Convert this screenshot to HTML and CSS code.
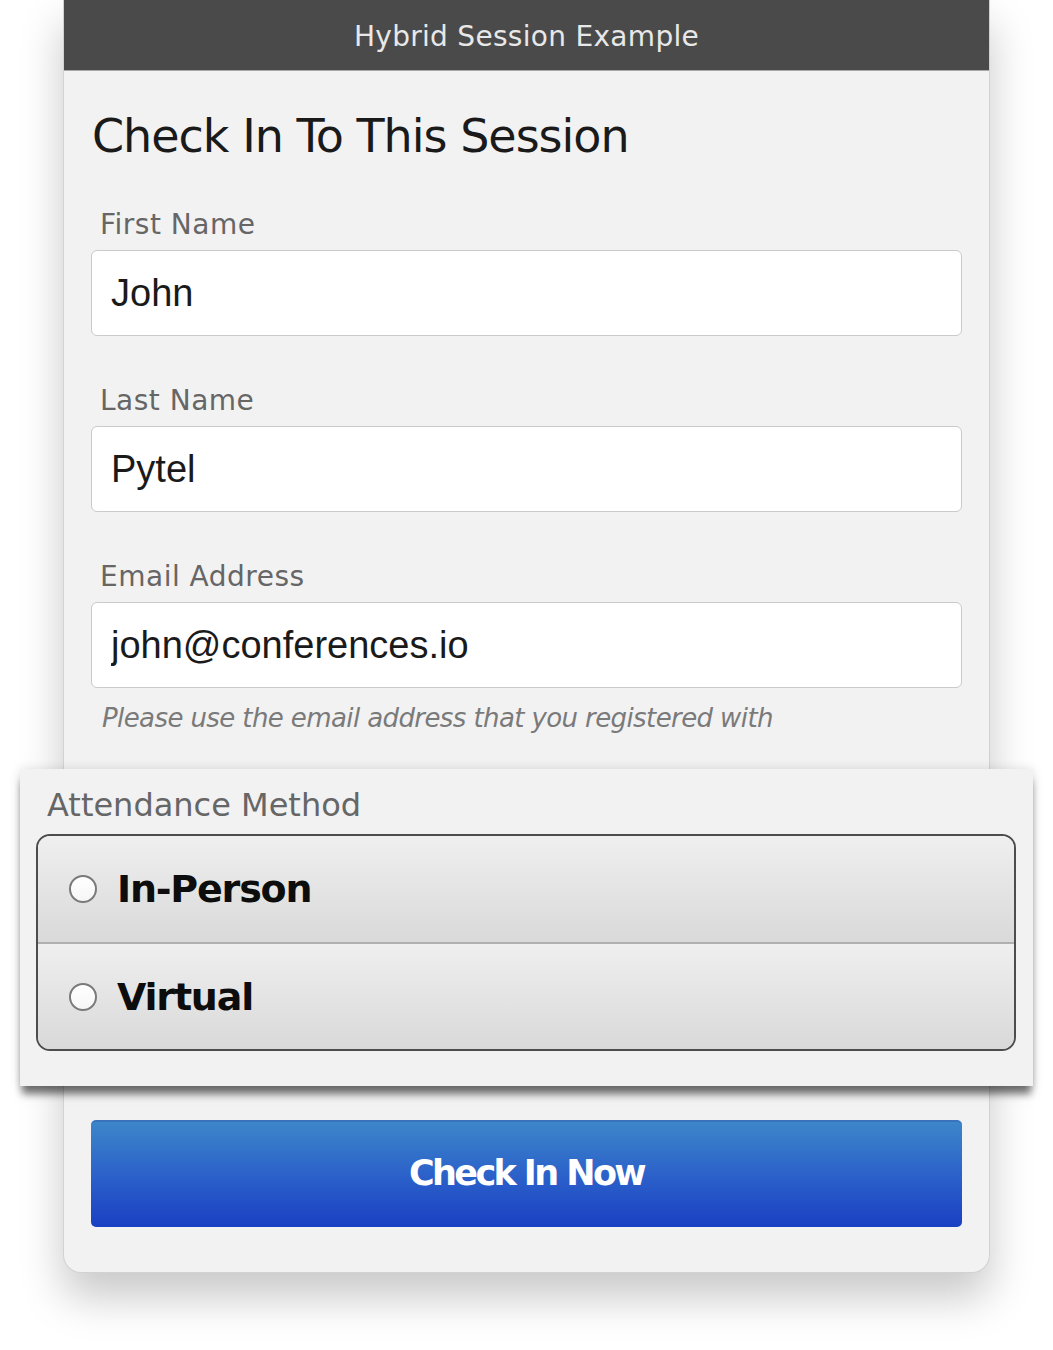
FILE: index.html
```html
<!DOCTYPE html>
<html lang="en">
<head>
  <meta charset="UTF-8">
  <meta name="viewport" content="width=device-width, initial-scale=1.0">
  <title>Hybrid Session Example</title>
  <link rel="stylesheet" href="styles.css">
</head>
<body>
  <div class="card">
    <header class="topbar">Hybrid Session Example</header>

    <form class="checkin" id="checkinForm">
      <h1>Check In To This Session</h1>

      <!-- Name fields -->
      <label class="field-label" for="first-name">First Name</label>
      <input class="field" type="text" id="first-name" value="John">

      <label class="field-label" for="last-name">Last Name</label>
      <input class="field" type="text" id="last-name" value="Pytel">

      <label class="field-label" for="email">Email Address</label>
      <input class="field" type="text" id="email" value="john@conferences.io">
      <p class="hint">Please use the email address that you registered with</p>

      <!-- Attendance picker (raised panel) -->
      <div class="attendance">
        <div class="attendance-title">Attendance Method</div>
        <div class="choice-group">
          <label class="choice">
            <input type="radio" name="attendance" value="in-person">
            <span class="dot"></span>
            <span class="choice-text">In-Person</span>
          </label>
          <label class="choice">
            <input type="radio" name="attendance" value="virtual">
            <span class="dot"></span>
            <span class="choice-text">Virtual</span>
          </label>
        </div>
      </div>

      <button type="button" class="submit">Check In Now</button>
    </form>
  </div>
</body>
</html>
```

FILE: styles.css
```css
body {
  margin: 0;
  padding-bottom: 78px;
  background: #fff;
  font-family: "DejaVu Sans", Verdana, sans-serif;
}
.card {
  width: 925px;
  margin: 0 auto;
  background: #f2f2f2;
  border: 1px solid #d2d2d2;
  border-top: none;
  border-radius: 0 0 18px 18px;
  box-shadow: 0 24px 44px rgba(0, 0, 0, 0.22);
}
.topbar {
  height: 70px;
  line-height: 74px;
  background: #4a4a4a;
  border-bottom: 1px solid #a8a8a8;
  color: #e8e8e8;
  font-size: 28px;
  letter-spacing: 0.3px;
  text-align: center;
}
.checkin {
  display: flex;
  flex-direction: column;
  padding: 37px 27px 45px;
}
h1 {
  margin: 0 0 44px 1px;
  font-size: 46px;
  line-height: 56px;
  font-weight: normal;
  color: #1a1a1a;
  letter-spacing: -1px;
}
.field-label {
  margin: 0 0 8px 9px;
  font-size: 28px;
  line-height: 34px;
  color: #666;
  letter-spacing: 0.5px;
}
.field {
  height: 86px;
  box-sizing: border-box;
  margin: 0 0 48px;
  padding: 0 19px;
  border: 1.5px solid #cacaca;
  border-radius: 6px;
  background: #fff;
  font-family: "Liberation Sans", Arial, sans-serif;
  font-size: 38px;
  color: #1a1a1a;
}
#email {
  margin-bottom: 14px;
}
.hint {
  margin: 0 0 35px 11px;
  font-size: 26px;
  line-height: 32px;
  font-style: italic;
  color: #7a7a7a;
  letter-spacing: -0.6px;
}
.attendance {
  margin: 0 -71px 34px -71px;
  padding: 16px 17px 35px 16px;
  background: #f2f2f2;
  box-shadow: 0 10px 8px -2px rgba(0, 0, 0, 0.55), 0 0 10px rgba(0, 0, 0, 0.12);
}
.attendance-title {
  margin: 0 0 9px 11px;
  font-size: 32px;
  line-height: 40px;
  color: #666;
}
.choice-group {
  border: 2px solid #4d4d4d;
  border-radius: 14px;
  overflow: hidden;
}
.choice {
  display: flex;
  align-items: center;
  gap: 20px;
  height: 106px;
  padding-left: 31px;
  background: linear-gradient(#efefef, #d9d9d9);
}
.choice + .choice {
  border-top: 2px solid #b0b0b0;
  height: 105px;
}
.choice input {
  display: none;
}
.dot {
  width: 24px;
  height: 24px;
  border: 2px solid #7a7a7a;
  border-radius: 50%;
  background: linear-gradient(#fff, #f6f6f6);
}
.choice-text {
  font-size: 38px;
  font-weight: bold;
  color: #0d0d0d;
  letter-spacing: -1.2px;
}
.submit {
  height: 107px;
  padding: 0 0 4px;
  border: none;
  border-top: 2px solid #3a72bd;
  border-radius: 5px;
  background: linear-gradient(#3c86c9, #2a5ec9 55%, #1a40c3);
  color: #fff;
  font-family: "DejaVu Sans", Verdana, sans-serif;
  font-size: 35px;
  font-weight: bold;
  letter-spacing: -2.6px;
  cursor: pointer;
}
```
